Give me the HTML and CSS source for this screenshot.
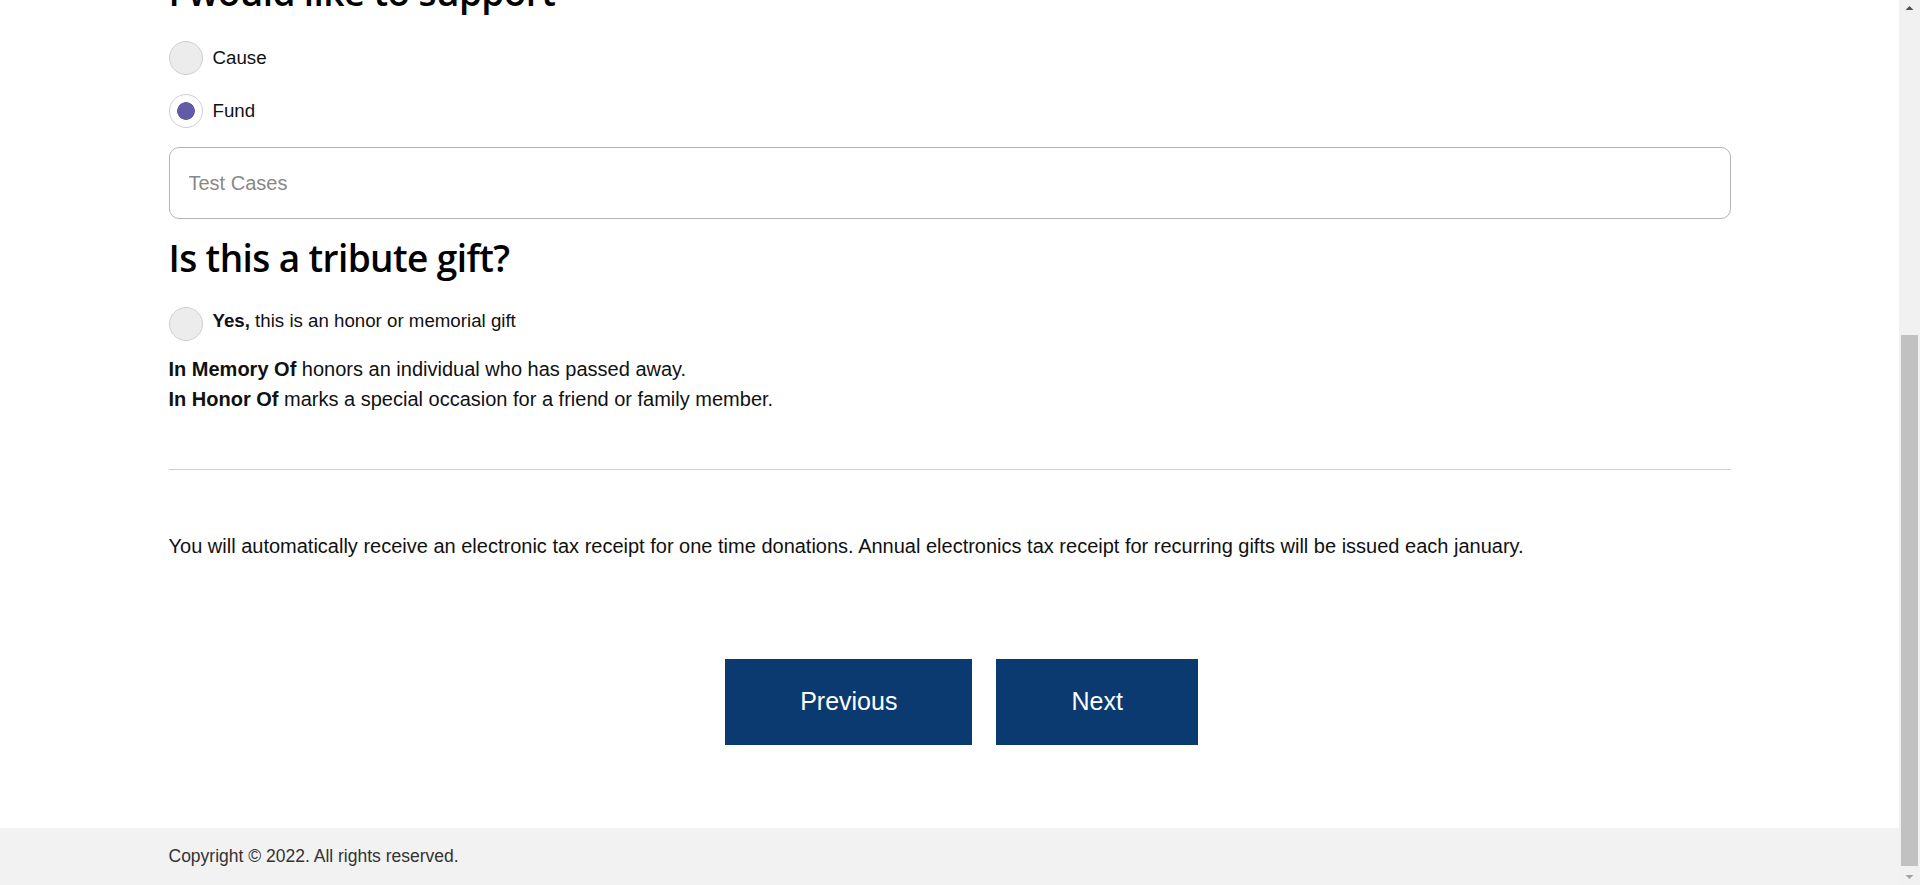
FILE: index.html
```html
<!DOCTYPE html>
<html lang="en">
<head>
<meta charset="utf-8">
<title>Donation form</title>
<link rel="stylesheet" href="styles.css">
</head>
<body>
<div class="viewport">
  <main class="container">
    <h2 class="section-title first">I would like to support</h2>

    <label class="radio-row">
      <input type="radio" name="support" class="radio">
      <span class="radio-label">Cause</span>
    </label>
    <label class="radio-row">
      <input type="radio" name="support" class="radio" checked>
      <span class="radio-label">Fund</span>
    </label>

    <input type="text" class="text-field" placeholder="Test Cases">

    <h2 class="section-title">Is this a tribute gift?</h2>

    <label class="radio-row yes-row">
      <input type="radio" name="tribute" class="radio">
      <span class="radio-label raised"><b>Yes,</b> this is an honor or memorial gift</span>
    </label>

    <p class="desc"><b>In Memory Of</b> honors an individual who has passed away.<br><b>In Honor Of</b> marks a special occasion for a friend or family member.</p>

    <hr class="divider">

    <p class="receipt">You will automatically receive an electronic tax receipt for one time donations. Annual electronics tax receipt for recurring gifts will be issued each january.</p>

    <div class="actions">
      <button class="btn" type="button">Previous</button>
      <button class="btn" type="button">Next</button>
    </div>
  </main>

  <footer class="footer">
    <div class="container footer-inner">Copyright © 2022. All rights reserved.</div>
  </footer>
</div>

<div class="scrollbar" aria-hidden="true">
  <svg class="sb-arrow sb-up" width="21" height="17" viewBox="0 0 21 17"><path d="M6.5 10 L10.5 6 L14.5 10 Z" fill="#505050"/></svg>
  <div class="sb-thumb"></div>
  <svg class="sb-arrow sb-down" width="21" height="17" viewBox="0 0 21 17"><path d="M6.5 7 L10.5 11 L14.5 7 Z" fill="#a3a3a3"/></svg>
</div>
</body>
</html>
```

FILE: styles.css
```css
html, body {
  margin: 0;
  padding: 0;
  height: 885px;
  overflow: hidden;
  background: #fff;
}

body {
  font-family: "Liberation Sans", Arial, sans-serif;
  color: #1c1c1c;
}

.viewport {
  width: 1899px;
  height: 885px;
  display: flex;
  flex-direction: column;
}

.container {
  width: 1562px;
  margin: 0 auto;
}

main.container {
  flex: 1;
  display: flex;
  flex-direction: column;
}

.section-title {
  font-family: "Open Sans", "Noto Sans", sans-serif;
  font-weight: 600;
  font-size: 37px;
  letter-spacing: -0.6px;
  line-height: 46px;
  height: 46px;
  margin: 0 0 26px 0;
  color: #000;
}

.section-title.first {
  margin-top: -31px;
  margin-bottom: 26px;
}

.radio-row {
  display: flex;
  align-items: center;
  height: 34px;
  margin-bottom: 19px;
  cursor: pointer;
}

.radio {
  appearance: none;
  -webkit-appearance: none;
  width: 34px;
  height: 34px;
  margin: 0 10px 0 0;
  border-radius: 50%;
  border: 1px solid #cfcfcf;
  background: #ececec;
  box-sizing: border-box;
  flex: none;
}

.radio:checked {
  background: radial-gradient(circle, #605ca8 0 8.5px, #fff 9.2px);
}

.radio-label {
  font-size: 18.7px;
  color: #111;
}

.radio-label.raised {
  margin-bottom: 6px;
}

.yes-row {
  margin-bottom: 13px;
}

.text-field {
  display: block;
  box-sizing: border-box;
  width: 100%;
  height: 72px;
  margin: 0 0 16px 0;
  padding: 0 19px;
  border: 1px solid #b5b5b5;
  border-radius: 10px;
  font-family: "Liberation Sans", Arial, sans-serif;
  font-size: 20px;
  outline: none;
}

.text-field::placeholder {
  color: #888;
}

.desc {
  margin: 0;
  font-size: 20px;
  line-height: 30px;
  color: #111;
}

.divider {
  border: 0;
  border-top: 1px solid #cfcfcf;
  margin: 55px 0 0 0;
  height: 0;
}

.receipt {
  margin: 61px 0 0 0;
  font-size: 20px;
  line-height: 30px;
  color: #111;
}

.actions {
  display: flex;
  justify-content: center;
  margin-top: 98px;
}

.btn {
  height: 86px;
  padding: 0 75px 2px;
  margin-left: 24px;
  border: 0;
  border-radius: 0;
  background: #0a3a70;
  color: #fff;
  font-family: "Liberation Sans", Arial, sans-serif;
  font-size: 25px;
  cursor: pointer;
}

.footer {
  height: 57px;
  background: #f2f2f2;
  flex: none;
}

.footer-inner {
  height: 57px;
  display: flex;
  align-items: center;
  font-size: 17.5px;
  color: #333;
}

.scrollbar {
  position: fixed;
  top: 0;
  right: 0;
  width: 21px;
  height: 885px;
  background: #f1f1f1;
}

.sb-arrow {
  position: absolute;
  left: 0;
  display: block;
}

.sb-up { top: 0; }
.sb-down { bottom: 0; }

.sb-thumb {
  position: absolute;
  left: 2px;
  right: 2px;
  top: 335px;
  bottom: 19px;
  background: #c1c1c1;
}
```
